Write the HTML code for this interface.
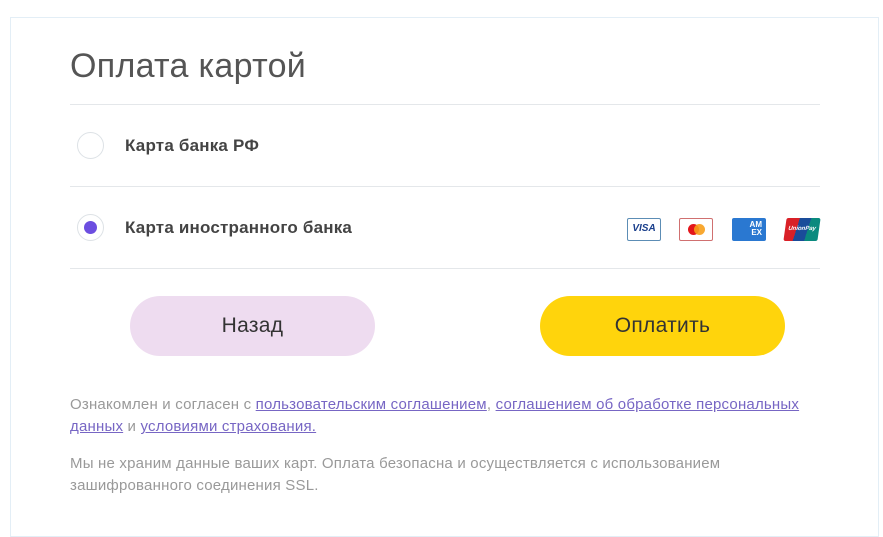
<!DOCTYPE html>
<html><head><meta charset="utf-8"><style>
body{margin:0;width:883px;height:516px;background:#fff;font-family:"Liberation Sans",sans-serif;position:relative;overflow:hidden}
.card{position:absolute;left:10px;top:17px;width:869px;height:520px;border:1px solid #e3eef6;box-sizing:border-box}
h1{position:absolute;left:70px;top:47px;margin:0;font-weight:300;font-size:34px;color:#555;letter-spacing:0.3px}
.line{position:absolute;left:70px;width:750px;height:1px;background:#e4e7ea}
.radio{position:absolute;left:77px;width:27px;height:27px;border:1px solid #dde2e6;border-radius:50%;box-sizing:border-box}
.lab{position:absolute;left:125px;font-size:17px;font-weight:bold;color:#444;letter-spacing:0.2px}
.btn{position:absolute;top:296px;width:245px;height:60px;border-radius:30px;text-align:center;line-height:60px;font-size:21px;color:#333;letter-spacing:0.3px}
.t{position:absolute;left:70px;font-size:15px;color:#999;line-height:22px;width:800px;letter-spacing:0.2px;white-space:nowrap}
.t a{color:#7766c4;text-decoration:underline}
.ic{position:absolute;top:218px;width:34px;height:23px;box-sizing:border-box;border-radius:2px}
</style></head><body>
<div class="card"></div>
<h1>Оплата картой</h1>
<div class="line" style="top:104px"></div>
<div class="line" style="top:186px"></div>
<div class="line" style="top:268px"></div>
<div class="radio" style="top:132px"></div>
<div class="lab" style="top:136px">Карта банка РФ</div>
<div class="radio" style="top:214px"><div style="position:absolute;left:6px;top:6px;width:13px;height:13px;border-radius:50%;background:#6c4ee0"></div></div>
<div class="lab" style="top:218px">Карта иностранного банка</div>
<div class="ic" style="left:627px;border:1.5px solid #5c8db5;font:bold italic 10px 'Liberation Sans';color:#1a3f8c;text-align:center;line-height:20px">VISA</div>
<div class="ic" style="left:679px;border:1.5px solid #d07070"><div style="position:absolute;left:8px;top:5px;width:11px;height:11px;border-radius:50%;background:#e3161b"></div><div style="position:absolute;left:14px;top:5px;width:11px;height:11px;border-radius:50%;background:#f79e1b;opacity:.9"></div></div>
<div class="ic" style="left:732px;background:#2a78d1;color:#fff;font:bold 8px 'Liberation Sans';text-align:right;padding:3px 4px;line-height:8px">AM<br>EX</div>
<div class="ic" style="left:785px;background:linear-gradient(100deg,#d92027 0 35%,#1a4c9a 35% 65%,#0a8a7e 65%);color:#fff;font:bold italic 6px 'Liberation Sans';text-align:center;line-height:23px;transform:skewX(-8deg)">UnionPay</div>
<div class="btn" style="left:130px;background:#eedcf0">Назад</div>
<div class="btn" style="left:540px;background:#ffd40c">Оплатить</div>
<div class="t" style="top:394px">Ознакомлен и согласен с <a>пользовательским соглашением</a>, <a>соглашением об обработке персональных</a><br><a>данных</a> и <a>условиями страхования.</a></div>
<div class="t" style="top:453px">Мы не храним данные ваших карт. Оплата безопасна и осуществляется с использованием<br>зашифрованного соединения SSL.</div>
</body></html>
